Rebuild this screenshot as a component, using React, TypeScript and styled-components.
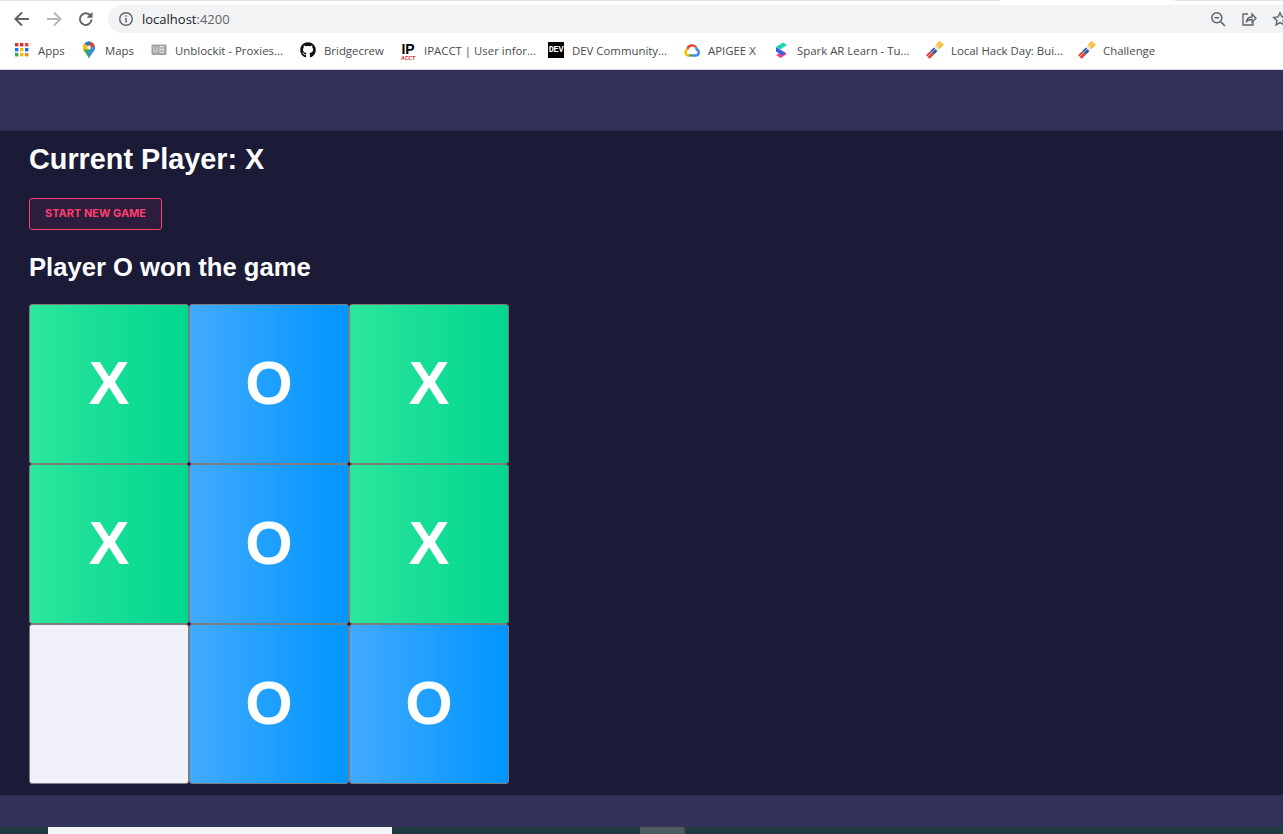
import styled, { createGlobalStyle } from "styled-components";
import { FaGithub } from "react-icons/fa";

const GlobalStyle = createGlobalStyle`
  html, body {
    margin: 0;
    padding: 0;
    height: 100%;
    overflow: hidden;
    background: #1b1b38;
  }
`;

const Page = styled.div`
  width: 1283px;
  height: 834px;
  display: flex;
  flex-direction: column;
  overflow: hidden;
`;

const Chrome = styled.div`
  height: 70px;
  flex: none;
  box-sizing: border-box;
  background: #fff;
  border-bottom: 1px solid #dcdce6;
  display: flex;
  flex-direction: column;
`;

const TopEdge = styled.div`
  height: 1px;
  flex: none;
  background: linear-gradient(90deg, #dfe1e5 0 1000px, #fff 1000px 1175px, #dfe1e5 1175px);
`;

const Toolbar = styled.div`
  height: 32px;
  margin-top: 2px;
  flex: none;
  display: flex;
  align-items: center;
  padding-left: 12px;
`;

const NavButton = styled.div<{ $color: string }>`
  width: 20px;
  height: 20px;
  margin-right: 12px;
  color: ${(p) => p.$color};
  display: flex;
  align-items: center;
  justify-content: center;
  flex: none;
`;

const Omnibox = styled.div`
  flex: 1;
  height: 28px;
  margin-right: -20px;
  border-radius: 14px 0 0 14px;
  background: #f1f3f4;
  display: flex;
  align-items: center;
  padding-left: 10px;
  gap: 8px;
`;

const Url = styled.span`
  font-family: "Open Sans", "Noto Sans", sans-serif;
  font-size: 13px;
  color: #202124;
`;

const UrlPort = styled.span`
  color: #5f6368;
`;

const OmniActions = styled.div`
  margin-left: auto;
  display: flex;
  align-items: center;
  gap: 15px;
  width: 93px;
  color: #5f6368;
  flex: none;
`;

const Bookmarks = styled.div`
  height: 26px;
  margin-top: 2px;
  flex: none;
  display: flex;
  align-items: center;
  padding-left: 14px;
`;

const Bookmark = styled.div<{ $width: number }>`
  width: ${(p) => p.$width}px;
  flex: none;
  display: flex;
  align-items: center;
  gap: 8px;
  font-family: "Open Sans", "Noto Sans", sans-serif;
  font-size: 11.4px;
  color: #4a4a4a;
  white-space: nowrap;
`;

const Favicon = styled.svg`
  width: 16px;
  height: 16px;
  flex: none;
  overflow: visible;
`;

const GithubMark = styled(FaGithub)`
  width: 16px;
  height: 16px;
  flex: none;
  color: #111;
`;

const IpBadge = styled.span`
  width: 16px;
  height: 17px;
  flex: none;
  display: flex;
  flex-direction: column;
  align-items: center;
  font-family: "Liberation Sans", sans-serif;
  font-weight: 700;
  color: #000;
  font-size: 14px;
  line-height: 14px;
`;

const IpSub = styled.span`
  font-size: 5px;
  line-height: 5px;
  color: #d8232a;
  font-style: italic;
`;

const DevBadge = styled.span`
  width: 16px;
  height: 16px;
  flex: none;
  background: #000;
  color: #fff;
  font-family: "Liberation Mono", monospace;
  font-weight: 700;
  font-size: 8.5px;
  letter-spacing: -0.3px;
  display: flex;
  align-items: center;
  justify-content: center;
`;

const TopBar = styled.header`
  height: 61px;
  flex: none;
  box-sizing: border-box;
  background: #323259;
  border-bottom: 1px solid #2c2c50;
`;

const Main = styled.main`
  flex: 1;
  min-height: 0;
  padding: 0 29px;
  background: #1b1b38;
  display: flex;
  flex-direction: column;
  align-items: flex-start;
`;

const Title = styled.h1`
  margin: 11px 0 0;
  font-family: "Liberation Sans", Arial, sans-serif;
  font-weight: 700;
  font-size: 28.8px;
  line-height: 34px;
  color: #fff;
`;

const NewGameButton = styled.button`
  margin-top: 22px;
  width: 133px;
  height: 32px;
  padding: 0 0 2px;
  border: 1px solid #ff3d71;
  border-radius: 3px;
  background: rgba(255, 61, 113, 0.08);
  color: #ff3d71;
  font-family: Inter, Roboto, sans-serif;
  font-weight: 700;
  font-size: 11px;
`;

const Winner = styled.h2`
  margin: 20px 0 0;
  font-family: "Liberation Sans", Arial, sans-serif;
  font-weight: 700;
  font-size: 25.6px;
  line-height: 34px;
  color: #fff;
`;

const Board = styled.div`
  margin-top: 20px;
  display: grid;
  grid-template-columns: repeat(3, 160px);
  grid-template-rows: repeat(3, 160px);
`;

const cellBackgrounds = {
  X: "linear-gradient(90deg, #2ce69b, #00d68f)",
  O: "linear-gradient(90deg, #42aaff, #0095ff)",
  "": "#f0f0f9",
};

const Cell = styled.div<{ $mark: "X" | "O" | "" }>`
  box-sizing: border-box;
  padding-bottom: 2px;
  border: 1px solid #7d7d80;
  border-radius: 3px;
  background: ${(p) => cellBackgrounds[p.$mark]};
  display: flex;
  align-items: center;
  justify-content: center;
  color: #fff;
  font-family: "Liberation Sans", Arial, sans-serif;
  font-weight: 700;
  font-size: 61px;
`;

const BottomBar = styled.footer`
  height: 32px;
  flex: none;
  box-sizing: border-box;
  background: #323259;
  border-top: 1px solid #2c2c50;
`;

const Taskbar = styled.div`
  height: 7px;
  flex: none;
  background: #20383f;
  display: flex;
  padding-left: 48px;
`;

const TaskSearch = styled.div`
  width: 344px;
  background: #f3f3f6;
  flex: none;
`;

const TaskButton = styled.div`
  width: 44px;
  margin-left: 248px;
  background: #4d5a62;
  border-right: 2px solid #33444b;
  flex: none;
`;

const Apps = () => {
  const colors = ["#d93025", "#d93025", "#ea4335", "#1a73e8", "#fbbc04", "#1a73e8", "#34a853", "#fbbc04", "#f28b25"];
  return (
    <Favicon viewBox="0 0 16 16">
      {colors.map((c, i) => (
        <rect key={i} x={1 + (i % 3) * 5} y={1 + Math.floor(i / 3) * 5} width="3.4" height="3.4" fill={c} />
      ))}
    </Favicon>
  );
};

const MapsPin = () => (
  <Favicon viewBox="0 0 16 16">
    <path d="M8 -0.500a6 6 0 0 0-6 6c0 3.500 3.500 5.500 6 11 2.500-5.500 6-7.500 6-11a6 6 0 0 0-6-6Z" fill="#34a853" />
    <path d="M3.700 1.300A6 6 0 0 0 2.500 8L6.500 7.500 7 4Z" fill="#fbbc04" />
    <path d="M3.700 1.300A6 6 0 0 1 10 -0.100L7 4Z" fill="#1a73e8" />
    <path d="M10 -0.100A6 6 0 0 1 13.600 3.500L10 7 7 4Z" fill="#ea4335" />
    <path d="M13.600 3.500A6 6 0 0 1 13.200 8.500C11.500 11 9.500 12.500 8 16.500L7.300 11 10 7Z" fill="#4285f4" />
    <circle cx="8" cy="5.500" r="2" fill="#fff" />
  </Favicon>
);

const UnblockIt = () => (
  <Favicon viewBox="0 0 16 16">
    <rect x="0.500" y="2.500" width="15" height="10.500" rx="1" fill="#a2a2a2" />
    <path d="M3 4.500v5.500h3V4.500M9 4.500v6M9 4.500h3v3H9M9 7.500h3.500V10.500H9" fill="none" stroke="#e8e8e8" strokeWidth="1" />
  </Favicon>
);

const GoogleCloud = () => (
  <Favicon viewBox="0 0 16 16" fill="none" strokeWidth="2.400">
    <path d="M3.400 7.400A4.800 4.800 0 0 1 11.900 5.200" stroke="#ea4335" />
    <path d="M11.900 5.200A4.800 4.800 0 0 1 12.800 7.700A3 3 0 0 1 11.500 13.500H8" stroke="#4285f4" />
    <path d="M8 13.500H5" stroke="#34a853" />
    <path d="M5 13.500A3.200 3.200 0 0 1 3.400 7.400" stroke="#fbbc04" />
  </Favicon>
);

const SparkAr = () => (
  <Favicon viewBox="0 0 16 16">
    <polygon points="3,13 9.500,9.500 14,12 7.500,16" fill="#f0497c" />
    <polygon points="3,5 7,7.500 13,11 9,13.500 3,9.500" fill="#3a5fe5" />
    <polygon points="3,5 10,0.500 14,3 7,7.500" fill="#1fd6b5" />
  </Favicon>
);

const MlhMark = () => (
  <Favicon viewBox="0 0 16 16">
    <g transform="rotate(-45 8 8)">
      <rect x="-2" y="5.500" width="6" height="5" fill="#e73427" />
      <rect x="4" y="5.500" width="5" height="5" fill="#1d539f" />
      <rect x="9" y="5.500" width="3" height="5" fill="#e9e4d8" />
      <rect x="12" y="5" width="6" height="5.500" fill="#f8b92a" />
      <path d="M-2 7.500h6M4 7.500h5M12 7.500h6" stroke="#fff" strokeWidth="0.800" />
    </g>
  </Favicon>
);

const marks: ("X" | "O" | "")[] = ["X", "O", "X", "X", "O", "X", "", "O", "O"];

const App = () => {
  return (
    <Page>
      <GlobalStyle />
      <Chrome>
        <TopEdge />
        <Toolbar>
          <NavButton $color="#5f6368">
            <svg width="18" height="18" viewBox="0 0 18 18" fill="none" stroke="currentColor" strokeWidth="2">
              <path d="M16 9H3M9 2.500 2.500 9 9 15.500" />
            </svg>
          </NavButton>
          <NavButton $color="#b4b6b9">
            <svg width="18" height="18" viewBox="0 0 18 18" fill="none" stroke="currentColor" strokeWidth="2">
              <path d="M2 9h13M9 2.500 15.500 9 9 15.500" />
            </svg>
          </NavButton>
          <NavButton $color="#5f6368">
            <svg width="18" height="18" viewBox="0 0 18 18" fill="none">
              <path d="M14.500 9.500a5.800 5.800 0 1 1-1.500-4.300" stroke="currentColor" strokeWidth="2" />
              <path d="M15.500 1.800v6h-6Z" fill="currentColor" />
            </svg>
          </NavButton>
          <Omnibox>
            <svg width="16" height="16" viewBox="0 0 16 16" fill="none" stroke="#5f6368">
              <circle cx="8" cy="8" r="6.300" strokeWidth="1.400" />
              <path d="M8 7v4.500M8 4.200v1.600" strokeWidth="1.500" />
            </svg>
            <Url>
              localhost<UrlPort>:4200</UrlPort>
            </Url>
            <OmniActions>
              <svg width="16" height="16" viewBox="0 0 16 16" fill="none" stroke="currentColor" strokeWidth="1.500">
                <circle cx="6.800" cy="6.800" r="5" />
                <path d="M10.500 10.500 15 15M4.500 6.800h4.600" />
              </svg>
              <svg width="16" height="16" viewBox="0 0 16 16" fill="none" stroke="currentColor" strokeWidth="1.300">
                <path d="M7 3H2v11h10v-3" />
                <path d="M5.500 10.500C6 7.500 8 6 11 6V3l4 4.300-4 4V8.500c-2.500 0-4 .6-5.500 2Z" />
              </svg>
              <svg width="16" height="16" viewBox="0 0 16 16" fill="none" stroke="currentColor" strokeWidth="1.400">
                <path d="m8 1.800 1.900 4.100 4.400.5-3.300 3 .9 4.400L8 11.600l-3.900 2.200.9-4.400-3.300-3 4.400-.5Z" />
              </svg>
            </OmniActions>
          </Omnibox>
        </Toolbar>
        <Bookmarks>
          <Bookmark $width={67}><Apps />Apps</Bookmark>
          <Bookmark $width={70}><MapsPin />Maps</Bookmark>
          <Bookmark $width={149}><UnblockIt />Unblockit - Proxies...</Bookmark>
          <Bookmark $width={100}><GithubMark />Bridgecrew</Bookmark>
          <Bookmark $width={148}>
            <IpBadge>IP<IpSub>ACCT</IpSub></IpBadge>
            IPACCT | User infor...
          </Bookmark>
          <Bookmark $width={136}><DevBadge>DEV</DevBadge>DEV Community...</Bookmark>
          <Bookmark $width={89}><GoogleCloud />APIGEE X</Bookmark>
          <Bookmark $width={154}><SparkAr />Spark AR Learn - Tu...</Bookmark>
          <Bookmark $width={152}><MlhMark />Local Hack Day: Bui...</Bookmark>
          <Bookmark $width={90}><MlhMark />Challenge</Bookmark>
        </Bookmarks>
      </Chrome>
      <TopBar />
      <Main>
        <Title>Current Player: X</Title>
        <NewGameButton>START NEW GAME</NewGameButton>
        <Winner>Player O won the game</Winner>
        <Board>
          {marks.map((mark, i) => (
            <Cell key={i} $mark={mark}>{mark}</Cell>
          ))}
        </Board>
      </Main>
      <BottomBar />
      <Taskbar>
        <TaskSearch />
        <TaskButton />
      </Taskbar>
    </Page>
  );
};

export default App;
